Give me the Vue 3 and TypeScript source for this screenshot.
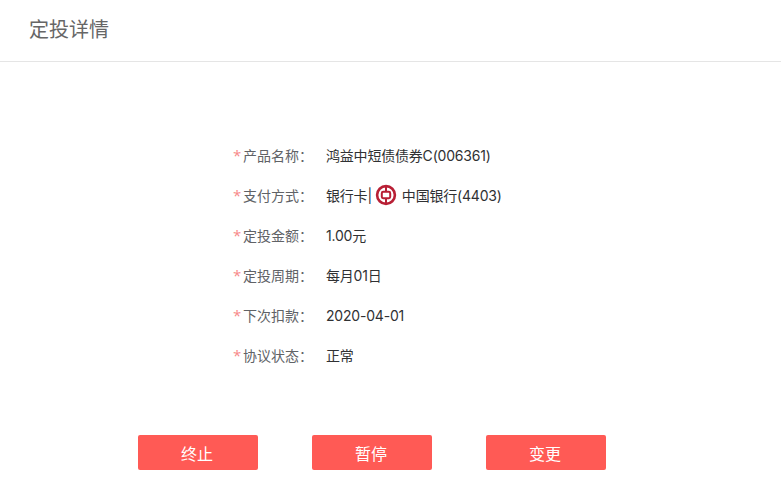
<script setup lang="ts">
const rows = [
  { label: '产品名称：', value: '鸿益中短债债券C(006361)' },
  { label: '支付方式：', value: '', bank: true },
  { label: '定投金额：', value: '1.00元' },
  { label: '定投周期：', value: '每月01日' },
  { label: '下次扣款：', value: '2020-04-01' },
  { label: '协议状态：', value: '正常' },
]
const actions = ['终止', '暂停', '变更']
</script>

<template>
  <div class="page">
    <header class="head">定投详情</header>
    <section class="form">
      <div v-for="r in rows" :key="r.label" class="row">
        <span class="star">*</span>
        <span class="label">{{ r.label }}</span>
        <span v-if="r.bank" class="value bank">
          <span>银行卡|</span>
          <svg class="logo" viewBox="0 0 22 22" width="22" height="22" aria-hidden="true">
            <circle cx="11" cy="11" r="8.9" fill="none" stroke="#b81f35" stroke-width="2.6" />
            <rect x="6.8" y="7.8" width="8.4" height="6.4" rx="1.4" fill="none" stroke="#b81f35" stroke-width="2" />
            <rect x="10" y="2" width="2" height="5" fill="#b81f35" />
            <rect x="10" y="15" width="2" height="5" fill="#b81f35" />
          </svg>
          <span>中国银行(4403)</span>
        </span>
        <span v-else class="value">{{ r.value }}</span>
      </div>
    </section>
    <footer class="actions">
      <button v-for="a in actions" :key="a" class="btn" type="button">{{ a }}</button>
    </footer>
  </div>
</template>

<style scoped>
.page {
  width: 781px;
  height: 483px;
  background: #fff;
  overflow: hidden;
  font-family: Inter, "Noto Sans CJK SC", sans-serif;
}
.head {
  height: 61px;
  border-bottom: 1px solid #e5e5e5;
  padding-left: 29px;
  font-size: 20px;
  line-height: 60px;
  color: #666;
}
.form {
  padding: 73px 0 0 233px;
}
.row {
  display: flex;
  align-items: center;
  height: 40px;
  font-size: 14px;
  color: #303133;
}
.star {
  width: 10px;
  color: #f78989;
  font-family: "Open Sans", sans-serif;
  font-size: 15px;
}
.label {
  width: 83px;
  color: #606266;
}
.value {
  color: #303133;
  letter-spacing: -0.2px;
}
.bank {
  display: flex;
  align-items: center;
}
.logo {
  margin: 0 5px 0 3px;
}
.actions {
  display: flex;
  gap: 54px;
  padding: 60px 0 0 138px;
}
.btn {
  width: 120px;
  height: 35px;
  border: 0;
  border-radius: 2px;
  background: #ff5a55;
  color: #fff;
  font-family: inherit;
  font-size: 16px;
  padding: 0 2px 0 0;
}
</style>
